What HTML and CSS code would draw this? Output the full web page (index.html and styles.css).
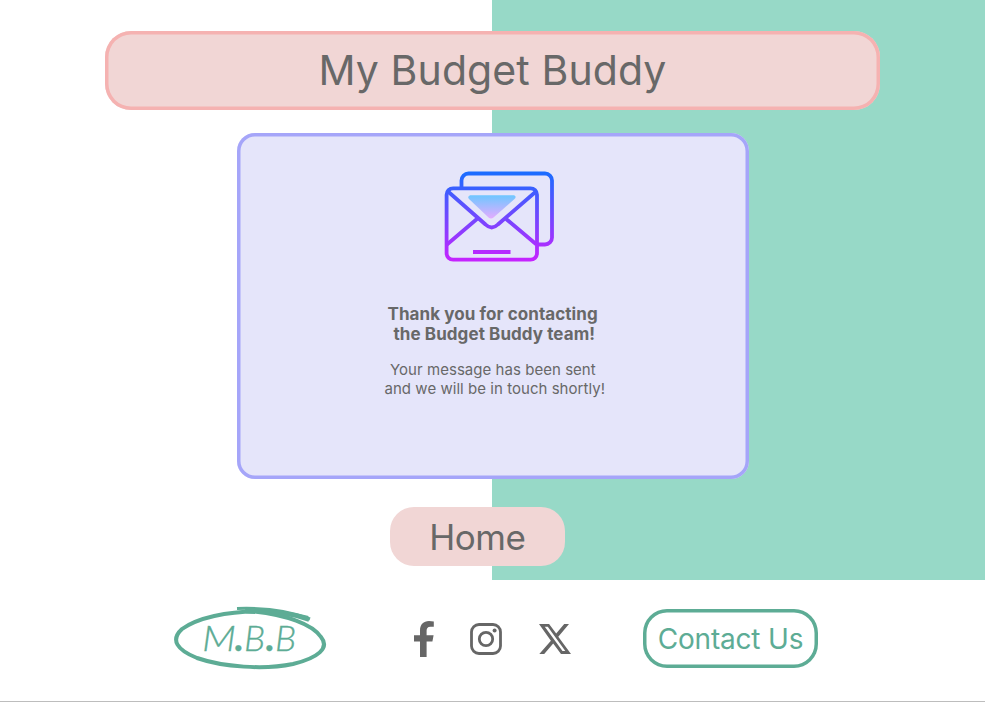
FILE: index.html
```html
<!DOCTYPE html>
<html lang="en">
<head>
<meta charset="utf-8">
<title>My Budget Buddy</title>
<link rel="stylesheet" href="styles.css">
</head>
<body>
<div class="page">
  <main class="hero">
    <header class="banner"><h1>My Budget Buddy</h1></header>
    <section class="card">
      <svg class="mail" viewBox="0 0 112 94" fill="none" aria-hidden="true">
        <defs>
          <linearGradient id="stroke" gradientUnits="userSpaceOnUse" x1="0" y1="2" x2="0" y2="92">
            <stop offset="0" stop-color="#1a6dff"/><stop offset="1" stop-color="#c822ff"/>
          </linearGradient>
          <linearGradient id="fill" gradientUnits="userSpaceOnUse" x1="0" y1="25" x2="0" y2="49">
            <stop offset="0" stop-color="#6dc7ff"/><stop offset="1" stop-color="#e6abff"/>
          </linearGradient>
        </defs>
        <g stroke="url(#stroke)" stroke-width="3.8">
          <path d="M17.5 17V10.500a7 7 0 0 1 7-7H101a7 7 0 0 1 7 7V67.500a7 7 0 0 1-7 7H94"/>
          <rect x="2.600" y="18.300" width="90.400" height="71.400" rx="6.500"/>
          <path d="M4 21.500L41.500 54.500Q47.700 60.500 53.900 54.500L92 21.500M3 74.500L33.500 48.500M61.500 48.500L92.500 74.500"/>
          <path d="M29 82H66.500"/>
        </g>
        <path d="M26 25.200H70Q73 26.600 70.500 29L49.500 47.500Q47 49.700 44.500 47.500L25 29Q23 26.600 26 25.200Z" fill="url(#fill)"/>
      </svg>
      <h2><span class="thanks">Thank you for contacting</span><span class="team">the Budget Buddy team!</span></h2>
      <p><span class="sent">Your message has been sent</span><span class="touch">and we will be in touch shortly!</span></p>
    </section>
    <a class="home">Home</a>
  </main>
  <footer class="footer">
    <svg class="logo" viewBox="0 0 156 66" fill="none" aria-label="M.B.B">
      <path d="M65 2.500Q108 1 138 13" stroke-width="3"/>
      <path d="M83 5Q115 6 137 14" stroke-width="3.500"/>
      <path d="M136 12Q116 6 88 5.500C55 5 25 12 10 23C-2 34 5 44 25 52C51 61 92 64 121 58C146 52 158 42 149 31C141 19 116 8 73 4.500" stroke-width="4"/>
      <text class="monogram" y="45"><tspan x="30" textLength="34" lengthAdjust="spacingAndGlyphs">M</tspan><tspan class="point" x="63">.</tspan><tspan x="72">B</tspan><tspan class="point" x="94">.</tspan><tspan x="103">B</tspan></text>
    </svg>
    <div class="social">
      <svg class="facebook" viewBox="0 0 20 36"><path d="M6 36V20.500H0V14.200H6V9.500C6 3.500 9.500 0 15 0Q18 0 19.800.4V5.800H16.500C13.500 5.800 12.600 7.500 12.600 9.800V14.200H19.600L18.400 20.500H12.600V36Z"/></svg>
      <svg class="instagram" viewBox="0 0 32 32" fill="none"><rect x="1.500" y="1.500" width="29" height="29" rx="7.500"/><circle cx="16" cy="16" r="6.700"/><circle class="dot" cx="24.600" cy="7.500" r="2"/></svg>
      <svg class="x" viewBox="0 0 32 30"><path fill-rule="evenodd" d="M25.200 0H30L19.300 12.700 32 30H22L14.200 19.600 5.200 30H.3L11.900 16.700 0 0H10.100L17.200 9.500ZM23.500 27H26.300L8.800 2.800H5.800Z"/></svg>
    </div>
    <a class="contact">Contact Us</a>
  </footer>
</div>
</body>
</html>
```

FILE: styles.css
```css
* { box-sizing: border-box; }

body {
  margin: 0;
  background: #fff;
  color: #686868;
  font-family: Inter, sans-serif;
}

h1, h2, p { margin: 0; font-weight: 400; }

.page {
  height: 702px;
  border-bottom: 1px solid #bdbdbd;
  overflow: hidden;
}

.hero {
  display: flex;
  flex-direction: column;
  align-items: flex-start;
  height: 580px;
  padding-top: 30.500px;
  background: linear-gradient(#97d9c7, #97d9c7) 492px 0 no-repeat;
}

.banner {
  display: flex;
  align-items: center;
  justify-content: center;
  width: 775px;
  height: 79px;
  margin-left: 105px;
  border-radius: 26px;
  background: #f1d6d5;
  box-shadow: inset 0 0 0 3.500px #f5b2b1;
}

.banner h1 {
  font-size: 41px;
  line-height: 50px;
  letter-spacing: .1px;
}

.card {
  display: flex;
  flex-direction: column;
  align-items: flex-start;
  width: 512px;
  height: 346px;
  margin: 23.500px 0 0 237px;
  padding-top: 37px;
  border-radius: 18px;
  background: #e5e5fa;
  box-shadow: inset 0 0 0 3.500px #a5a5f9;
}

.mail {
  width: 112px;
  height: 94px;
  margin-left: 206.500px;
}

.card h2, .card p { display: flex; flex-direction: column; align-items: flex-start; white-space: nowrap; }
.card h2 { margin-top: 40px; font-size: 17px; line-height: 20px; font-weight: 700; letter-spacing: .08px; }
.thanks { margin-left: 150.500px; }
.team { margin-left: 156.500px; }
.card p { margin-top: 17px; font-size: 15px; line-height: 18.500px; letter-spacing: .04px; }
.sent { margin-left: 153px; }
.touch { margin-left: 147.500px; }

.home {
  display: flex;
  align-items: center;
  justify-content: center;
  width: 175.500px;
  height: 59px;
  margin: 28px 0 0 389.500px;
  border-radius: 24px;
  background: #f1d6d5;
  font-size: 35px;
  letter-spacing: -.5px;
}

.footer {
  display: flex;
  align-items: center;
  height: 117px;
}

.logo {
  width: 156px;
  height: 66px;
  margin-left: 172px;
  stroke: #5dac95;
}

.monogram {
  fill: #5dac95;
  stroke-width: .3px;
  font: italic 300 36px Lato, sans-serif;
}

.point { font-weight: 900; }

.social {
  display: flex;
  align-items: center;
  width: 157px;
  margin-left: 86px;
  fill: #666;
}

.facebook { width: 20px; height: 36px; }
.instagram { width: 32px; height: 32px; margin-left: 35.500px; stroke: #666; stroke-width: 2.800px; }
.instagram .dot { fill: #666; stroke: none; }
.x { width: 32px; height: 30px; margin-left: 37px; }

.contact {
  display: flex;
  align-items: center;
  justify-content: center;
  width: 175px;
  height: 59px;
  margin-left: 72px;
  padding-top: 1px;
  border-radius: 24px;
  box-shadow: inset 0 0 0 3.500px #5dac95;
  color: #5dac95;
  font-size: 28px;
  letter-spacing: -.2px;
  white-space: nowrap;
}
```
